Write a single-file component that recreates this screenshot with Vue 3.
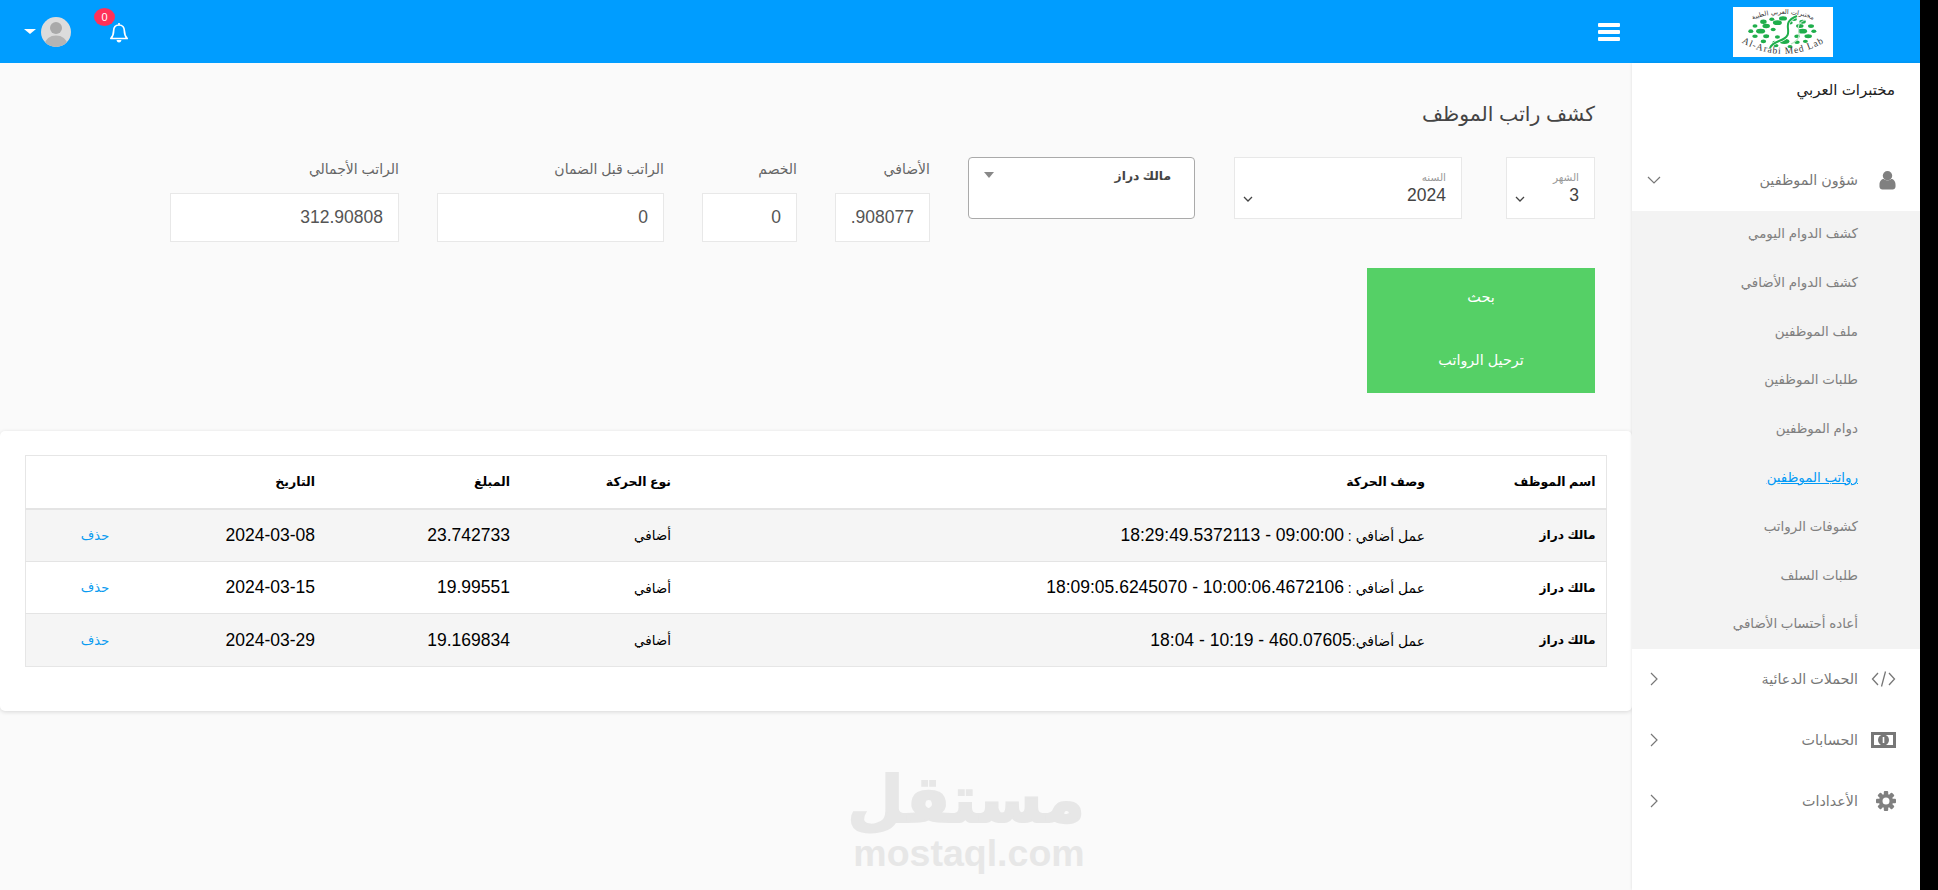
<script setup>
const subItems = [
  { label: 'كشف الدوام اليومي' },
  { label: 'كشف الدوام الأضافي' },
  { label: 'ملف الموظفين' },
  { label: 'طلبات الموظفين' },
  { label: 'دوام الموظفين' },
  { label: 'رواتب الموظفين', active: true },
  { label: 'كشوفات الرواتب' },
  { label: 'طلبات السلف' },
  { label: 'أعاده أحتساب الأضافي' }
]
const fields = [
  { label: 'الأضافي', value: '908077.', cls: 'f-add' },
  { label: 'الخصم', value: '0', cls: 'f-disc' },
  { label: 'الراتب قبل الضمان', value: '0', cls: 'f-before' },
  { label: 'الراتب الأجمالي', value: '312.90808', cls: 'f-gross' }
]
const rows = [
  { ar: 'عمل أضافي : ', num: '09:00:00 - 18:29:49.5372113', amount: '23.742733', date: '2024-03-08' },
  { ar: 'عمل أضافي : ', num: '10:00:06.4672106 - 18:09:05.6245070', amount: '19.99551', date: '2024-03-15' },
  { ar: 'عمل أضافي:', num: '460.07605 - 10:19 - 18:04', amount: '19.169834', date: '2024-03-29' }
]
const rawDots = [
  [50,9,3.2,2],[42,10,2,1.6],[58,10,2.2,1.6],[36,13,2.6,2],[64,13,2.6,1.8],[46,14,3.6,2.2],[55,14,2.2,1.6],
  [30,18,2,1.6],[38,18,3,2],[70,18,2.4,1.7],[62,18,3,1.8],[27,24,2,1.7],[34,24,3.6,2.2],[43,22,2,1.6],
  [64,24,3.6,2.2],[72,24,2,1.6],[30,30,2.2,1.6],[38,30,2.4,1.8],[46,31,2,1.6],[60,30,2.2,1.7],[68,30,3,1.8],
  [36,36,2.2,1.7],[51,36,4,2.4],[44,37,1.8,1.4],[60,37,2.2,1.6],[66,36,2,1.5],[45,41,2,1.4],[55,42,2,1.4]
]
const dots = rawDots.map(d => [50 + (d[0] - 50) * 1.4, 25 + (d[1] - 25) * 0.85, d[2] * 1.25, d[3] * 1.1])
const teeth = [0, 45, 90, 135, 180, 225, 270, 315]
</script>

<template>
  <div class="page">
    <div class="frame">
      <header class="topbar">
        <div class="user-group">
          <span class="caret"></span>
          <svg class="avatar" viewBox="0 0 30 30">
            <defs><clipPath id="av"><circle cx="15" cy="15" r="15" /></clipPath></defs>
            <circle cx="15" cy="15" r="15" fill="#dcdcdc" />
            <g clip-path="url(#av)">
              <circle cx="15" cy="11" r="6" fill="#a9a9a9" />
              <ellipse cx="15" cy="27" rx="11" ry="8.5" fill="#b4b4b4" />
            </g>
          </svg>
          <div class="bell-wrap">
            <span class="badge">0</span>
            <svg class="bell" viewBox="0 0 20 22">
              <path d="M10 1v2M10 3c-3.600 0-5.400 2.700-5.400 6 0 4-1 5.600-2.800 7.500h16.400c-1.800-1.900-2.800-3.500-2.800-7.500 0-3.300-1.800-6-5.400-6z" fill="none" stroke="#fff" stroke-width="1.700" stroke-linejoin="round" />
              <path d="M7.500 18h5c-.3 1.700-1.300 2.500-2.500 2.500s-2.200-.8-2.500-2.500z" fill="#fff" />
            </svg>
          </div>
        </div>
        <div class="brand-group">
          <div class="burger"><i></i><i></i><i></i></div>
          <svg class="logo" viewBox="0 0 100 50">
            <rect width="100" height="50" fill="#fff" />
            <defs>
              <path id="arc-top" d="M12 22 A38 15 0 0 1 88 22" />
              <path id="arc-bot" d="M6 34 Q50 60 94 34" />
            </defs>
            <text class="logo-ar"><textPath href="#arc-top" startOffset="50%" text-anchor="middle">مختبرات العربي الطبية</textPath></text>
            <g fill="#1fae4b">
              <ellipse v-for="(d, i) in dots" :key="i" :cx="d[0]" :cy="d[1]" :rx="d[2]" :ry="d[3]" />
            </g>
            <path d="M64 9 C44 17 66 27 46 34 C41 36 38 38 37 41" fill="none" stroke="#fff" stroke-width="3.500" />
            <path d="M64 9 C44 17 66 27 46 34 C41 36 38 38 37 41" fill="none" stroke="#1fae4b" stroke-width="2" />
            <path d="M72 13 C56 20 76 28 58 37" fill="none" stroke="#bfe6c9" stroke-width="1.200" />
            <text class="logo-en"><textPath href="#arc-bot" startOffset="50%" text-anchor="middle">Al-Arabi Med Lab</textPath></text>
          </svg>
        </div>
      </header>

      <div class="body" dir="rtl">
        <aside class="sidebar">
          <div class="org">مختبرات العربي</div>
          <div class="nav-item first">
            <svg class="nav-icon ic-user" viewBox="0 0 18 20">
              <circle cx="9" cy="5.500" r="5" fill="#808080" />
              <path d="M0.500 15c0-4 2.500-6 4.500-6 1 1 2.500 1.500 4 1.500s3-.5 4-1.500c2 0 4.500 2 4.500 6v2c0 2-1.500 3-3 3h-11c-1.500 0-3-1-3-3z" fill="#808080" />
            </svg>
            <span class="nav-label">شؤون الموظفين</span>
            <svg class="chev-down" viewBox="0 0 14 8" width="14" height="8"><path d="M1 1l6 6 6-6" fill="none" stroke="#777" stroke-width="1.200" /></svg>
          </div>
          <ul class="submenu">
            <li v-for="s in subItems" :key="s.label" :class="{ active: s.active }"><span>{{ s.label }}</span></li>
          </ul>
          <div class="nav-item">
            <svg class="nav-icon" viewBox="0 0 25 18">
              <path d="M7 3L1.500 9 7 15M18 3l5.500 6L18 15M14.500 1.500L10.500 16.500" fill="none" stroke="#777" stroke-width="1.300" />
            </svg>
            <span class="nav-label">الحملات الدعائية</span>
            <svg class="chev-side" viewBox="0 0 8 14" width="8" height="14"><path d="M1 1l6 6-6 6" fill="none" stroke="#777" stroke-width="1.200" /></svg>
          </div>
          <div class="nav-item">
            <svg class="nav-icon" viewBox="0 0 25 18">
              <rect x="0" y="1" width="25" height="16" fill="#777" />
              <rect x="3" y="4" width="19" height="10" fill="#fff" />
              <circle cx="12.500" cy="9" r="5.500" fill="#777" />
              <rect x="11.700" y="6" width="1.600" height="6" fill="#fff" />
            </svg>
            <span class="nav-label">الحسابات</span>
            <svg class="chev-side" viewBox="0 0 8 14" width="8" height="14"><path d="M1 1l6 6-6 6" fill="none" stroke="#777" stroke-width="1.200" /></svg>
          </div>
          <div class="nav-item">
            <svg class="nav-icon ic-gear" viewBox="0 0 20 20">
              <g fill="#808080">
                <rect v-for="t in teeth" :key="t" x="7.800" y="0" width="4.400" height="5" rx="1" :transform="`rotate(${t} 10 10)`" />
              </g>
              <circle cx="10" cy="10" r="5.300" fill="none" stroke="#808080" stroke-width="3.600" />
            </svg>
            <span class="nav-label">الأعدادات</span>
            <svg class="chev-side" viewBox="0 0 8 14" width="8" height="14"><path d="M1 1l6 6-6 6" fill="none" stroke="#777" stroke-width="1.200" /></svg>
          </div>
        </aside>

        <main class="main">
          <section class="filters">
            <h1 class="title">كشف راتب الموظف</h1>
            <div class="form-row">
              <div class="box month">
                <span class="box-label">الشهر</span>
                <span class="box-value">3</span>
                <svg class="box-chev" viewBox="0 0 10 6" width="10" height="6"><path d="M1 1l4 4 4-4" fill="none" stroke="#444" stroke-width="1.300" /></svg>
              </div>
              <div class="box year">
                <span class="box-label">السنه</span>
                <span class="box-value">2024</span>
                <svg class="box-chev" viewBox="0 0 10 6" width="10" height="6"><path d="M1 1l4 4 4-4" fill="none" stroke="#444" stroke-width="1.300" /></svg>
              </div>
              <div class="employee">
                <span class="emp-name">مالك دراز</span>
                <span class="emp-arrow"></span>
              </div>
              <div v-for="f in fields" :key="f.label" class="field" :class="f.cls">
                <label class="field-label">{{ f.label }}</label>
                <div class="field-input">{{ f.value }}</div>
              </div>
            </div>
            <div class="actions">
              <a class="action">بحث</a>
              <a class="action">ترحيل الرواتب</a>
            </div>
          </section>

          <section class="card">
            <table class="grid">
              <thead>
                <tr>
                  <th class="c-name">اسم الموظف</th>
                  <th class="c-desc">وصف الحركة</th>
                  <th class="c-type">نوع الحركة</th>
                  <th class="c-amount">المبلغ</th>
                  <th class="c-date">التاريخ</th>
                  <th class="c-act"></th>
                </tr>
              </thead>
              <tbody>
                <tr v-for="r in rows" :key="r.date">
                  <td class="emp">مالك دراز</td>
                  <td><span class="desc-ar">{{ r.ar }}</span><span class="num">{{ r.num }}</span></td>
                  <td class="type">أضافي</td>
                  <td class="num">{{ r.amount }}</td>
                  <td class="num">{{ r.date }}</td>
                  <td class="del"><a>حذف</a></td>
                </tr>
              </tbody>
            </table>
          </section>

          <div class="watermark" dir="ltr">
            <div class="wm-ar" dir="rtl">مستقل</div>
            <div class="wm-en">mostaql.com</div>
          </div>
        </main>
      </div>
    </div>
  </div>
</template>

<style>
html, body { margin: 0; background: #000; }
</style>

<style scoped>
.page {
  width: 1938px;
  height: 890px;
  overflow: hidden;
  background: #000;
  font-family: "Liberation Sans", "DejaVu Sans", sans-serif;
}
.frame { width: 1920px; height: 890px; display: flex; flex-direction: column; background: #fafafa; }

.topbar {
  height: 63px;
  flex: none;
  background: #009dff;
  display: flex;
  justify-content: space-between;
  align-items: center;
}
.user-group { display: flex; align-items: center; padding-left: 24px; height: 63px; }
.caret {
  width: 0; height: 0;
  border-left: 6px solid transparent;
  border-right: 6px solid transparent;
  border-top: 5px solid #fff;
  margin-right: 5px;
}
.avatar { width: 30px; height: 30px; display: block; margin-top: 1px; }
.bell-wrap { position: relative; width: 24px; height: 22px; margin-left: 38px; margin-top: 3px; }
.bell { width: 20px; height: 22px; display: block; }
.badge {
  position: absolute;
  left: -15px; top: -14px;
  width: 21px; height: 18px;
  border-radius: 50%;
  background: #ff3158;
  color: #fff;
  font-size: 11px;
  line-height: 18px;
  text-align: center;
}
.brand-group { display: flex; align-items: center; padding-right: 87px; }
.burger { width: 22px; display: flex; flex-direction: column; gap: 3px; margin-right: 113px; }
.burger i { display: block; height: 4px; background: #fff; border-radius: 1px; }
.logo { width: 100px; height: 50px; display: block; }
.logo-ar { font: 6.500px "DejaVu Sans", sans-serif; fill: #333; }
.logo-en { font: 9.500px "Liberation Serif", serif; fill: #333; letter-spacing: 1px; }

.body { flex: 1; display: flex; min-height: 0; }

.sidebar {
  width: 288px;
  flex: none;
  background: #fff;
  box-shadow: 0 0 3px rgba(0,0,0,.12);
  z-index: 1;
}
.org { padding: 17px 25px 0 0; color: #222; font-size: 15px; line-height: 20px; height: 70px; box-sizing: border-box; }
.nav-item {
  height: 61px;
  box-sizing: border-box;
  padding: 0 24px 2px 15px;
  display: flex;
  align-items: center;
  color: #777;
  font-size: 14.300px;
}
.nav-item.first { height: 78px; padding-top: 16px; padding-bottom: 0; }
.nav-icon { flex: none; width: 25px; height: 18px; display: block; }
.ic-user { width: 17px; height: 20px; margin-left: 8px; }
.ic-gear { width: 20px; height: 20px; margin-left: 5px; }
.nav-label { margin-right: 13px; flex: 1; }
.chev-side { margin-left: 3px; }

.submenu { list-style: none; margin: 0; padding: 0 62px 0 0; background: #f3f3f3; height: 438px; box-sizing: border-box; }
.submenu li { height: 48.800px; line-height: 46px; color: #808080; font-size: 13.400px; }
.submenu li.active { color: #0099f5; }
.submenu li.active span { text-decoration: underline; }

.main { flex: 1; min-width: 0; overflow: hidden; }
.filters { padding: 0 37px 38px 0; }
.title { margin: 0; padding: 37px 0 29px; font-weight: 400; font-size: 20.400px; line-height: 28px; color: #444; }

.form-row { display: flex; align-items: flex-start; gap: 38px; }
.box {
  height: 62px;
  box-sizing: border-box;
  border: 1px solid #e8e8e8;
  background: #fff;
  position: relative;
  padding: 12px 15px 0;
  display: flex;
  flex-direction: column;
}
.month { width: 89px; margin-left: 6px; }
.year { width: 228px; margin-left: 1px; }
.box-label { font-size: 10.500px; line-height: 14px; color: #999; }
.box-value { font-size: 17.500px; line-height: 22px; color: #444; }
.box-chev { position: absolute; left: 8px; bottom: 16px; }
.employee {
  width: 227px;
  height: 62px;
  box-sizing: border-box;
  border: 1px solid #aaa;
  border-radius: 4px;
  background: #fff;
  position: relative;
  padding: 8px 23px 0 0;
}
.emp-name { font-size: 12.300px; font-weight: 700; line-height: 20px; color: #444; display: block; }
.emp-arrow {
  position: absolute;
  left: 15px; top: 14px;
  border-left: 5px solid transparent;
  border-right: 5px solid transparent;
  border-top: 6px solid #888;
}
.field-label { display: block; height: 36px; line-height: 24px; font-size: 14px; color: #666; }
.field-input {
  height: 49px;
  box-sizing: border-box;
  border: 1px solid #e8e8e8;
  background: #fff;
  padding-right: 15px;
  font-size: 17.500px;
  line-height: 47px;
  color: #555;
}
.f-add { width: 95px; }
.f-disc { width: 95px; }
.f-before { width: 227px; }
.f-gross { width: 229px; }

.actions { width: 228px; height: 125px; margin-top: 26px; background: #55d066; display: flex; flex-direction: column; }
.action { height: 62.500px; line-height: 58px; text-align: center; color: #fff; font-size: 14.400px; }

.card {
  height: 280px;
  box-sizing: border-box;
  padding: 24px 25px 0;
  background: #fff;
  border-radius: 5px;
  box-shadow: 0 1px 4px rgba(0,0,0,.14);
}
.grid { width: 1582px; table-layout: fixed; border-collapse: collapse; border: 1px solid #e6e6e6; color: #000; }
.grid th { box-sizing: border-box; height: 53px; padding: 0 10.500px; text-align: right; font-size: 12.500px; font-weight: 700; border-bottom: 2px solid #e4e4e4; }
.grid td { box-sizing: border-box; height: 52.700px; padding: 0 10.500px 0 10px; border-top: 1px solid #e4e4e4; white-space: nowrap; font-size: 13.500px; }
.grid tbody tr:nth-child(odd) { background: #f5f5f5; }
.c-name { width: 171px; }
.c-desc { width: 754px; }
.c-type { width: 161px; }
.c-amount { width: 195px; }
.c-date { width: 161px; }
.grid td.emp { font-weight: 700; font-size: 12.200px; }
.grid td.num, .num { font-size: 17.500px; }
.desc-ar { font-size: 14px; }
.grid td.del { text-align: center; }
.del a { color: #0a9bf0; font-size: 13px; }

.watermark { width: 232px; margin: 53px 547px 0 0; color: #e7e7e7; text-align: center; }
.wm-ar { font-family: "DejaVu Sans", sans-serif; font-weight: 700; font-size: 65px; line-height: 71px; padding-left: 10px; box-sizing: border-box; -webkit-text-stroke: 2px #e7e7e7; }
.wm-en { font-family: "Liberation Sans", sans-serif; font-weight: 700; font-size: 37.500px; line-height: 36px; }
</style>
